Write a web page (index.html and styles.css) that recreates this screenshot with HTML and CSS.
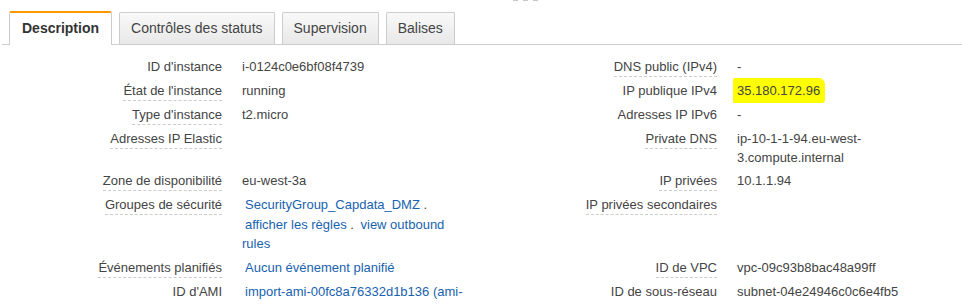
FILE: index.html
```html
<!DOCTYPE html>
<html lang="fr">
<head>
    <meta charset="UTF-8">
    <meta name="viewport" content="width=device-width, initial-scale=1.0">
    <title>Instance - Description</title>
    <link rel="stylesheet" href="styles.css">
</head>
<body>
    <div class="handle"><span></span><span></span><span></span></div>

    <ul class="tabs">
        <li class="tab active">Description</li>
        <li class="tab">Contrôles des statuts</li>
        <li class="tab">Supervision</li>
        <li class="tab">Balises</li>
    </ul>

    <div class="details">
        <div class="label"><span>ID d'instance</span></div>
        <div class="value">i-0124c0e6bf08f4739</div>
        <div class="label"><span class="tip">DNS public (IPv4)</span></div>
        <div class="value">-</div>

        <div class="label"><span class="tip">État de l'instance</span></div>
        <div class="value">running</div>
        <div class="label"><span>IP publique IPv4</span></div>
        <div class="value"><span class="marker">35.180.172.96</span></div>

        <div class="label"><span class="tip">Type d'instance</span></div>
        <div class="value">t2.micro</div>
        <div class="label"><span>Adresses IP IPv6</span></div>
        <div class="value">-</div>

        <div class="label"><span class="tip">Adresses IP Elastic</span></div>
        <div class="value"></div>
        <div class="label"><span class="tip">Private DNS</span></div>
        <div class="value">ip-10-1-1-94.eu-west-<wbr>3.compute.internal</div>

        <div class="label"><span class="tip">Zone de disponibilité</span></div>
        <div class="value">eu-west-3a</div>
        <div class="label"><span class="tip">IP privées</span></div>
        <div class="value">10.1.1.94</div>

        <div class="label"><span class="tip">Groupes de sécurité</span></div>
        <div class="value links"><a href="#">SecurityGroup_Capdata_DMZ</a> . <a href="#">afficher les règles</a> . <a href="#">view outbound rules</a></div>
        <div class="label"><span class="tip">IP privées secondaires</span></div>
        <div class="value"></div>

        <div class="label"><span class="tip">Événements planifiés</span></div>
        <div class="value"><a href="#">Aucun événement planifié</a></div>
        <div class="label"><span class="tip">ID de VPC</span></div>
        <div class="value">vpc-09c93b8bac48a99ff</div>

        <div class="label"><span>ID d'AMI</span></div>
        <div class="value"><a href="#">import-ami-00fc8a76332d1b136 (ami-</a></div>
        <div class="label"><span>ID de sous-réseau</span></div>
        <div class="value">subnet-04e24946c0c6e4fb5</div>
    </div>
</body>
</html>
```

FILE: styles.css
```css
html {
    overflow: hidden;
}

body {
    font-family: "Liberation Sans", Arial, sans-serif;
    margin: 0;
    padding: 0;
    background-color: #fff;
    color: #444;
}

/* split pane drag handle */
.handle {
    display: flex;
    gap: 5px;
    margin-left: 513px;
    height: 1px;
}

.handle span {
    width: 5px;
    height: 1px;
    background-color: #c8c8c8;
}

.tabs {
    list-style-type: none;
    display: flex;
    align-items: flex-end;
    gap: 7px;
    margin: 10px 0 0 2px;
    padding: 0 0 0 7px;
    border-bottom: 1px solid #ccc;
}

.tab {
    height: 31px;
    line-height: 31px;
    padding: 0 11px;
    font-size: 14px;
    color: #444;
    border: 1px solid #ccc;
    border-bottom: none;
    border-radius: 2px 2px 0 0;
    background: linear-gradient(#f9f9f9, #e8e8e8);
    cursor: pointer;
}

.tab.active {
    height: 32px;
    line-height: 30px;
    padding: 0 12px;
    font-weight: bold;
    color: #333;
    border-top: 2px solid #f90;
    background: #fff;
    margin-bottom: -1px;
}

.details {
    display: grid;
    grid-template-columns: 222px 228px 227px 225px;
    column-gap: 20px;
    margin-top: 10px;
    font-size: 13px;
}

.label,
.value {
    padding: 2px 0;
    line-height: 19px;
}

.label {
    text-align: right;
}

.label span {
    display: inline-block;
    border-bottom: 1px solid transparent;
}

.label .tip {
    border-bottom: 1px dashed #ccc;
}

.value.links {
    line-height: 19.5px;
}

.value a {
    color: #1862b0;
    text-decoration: none;
    padding-left: 3px;
}

.marker {
    background-color: #ffff00;
    padding: 5px 5px 5px 4px;
    margin-left: -4px;
    border-radius: 2px 6px 3px 1px;
}
```
